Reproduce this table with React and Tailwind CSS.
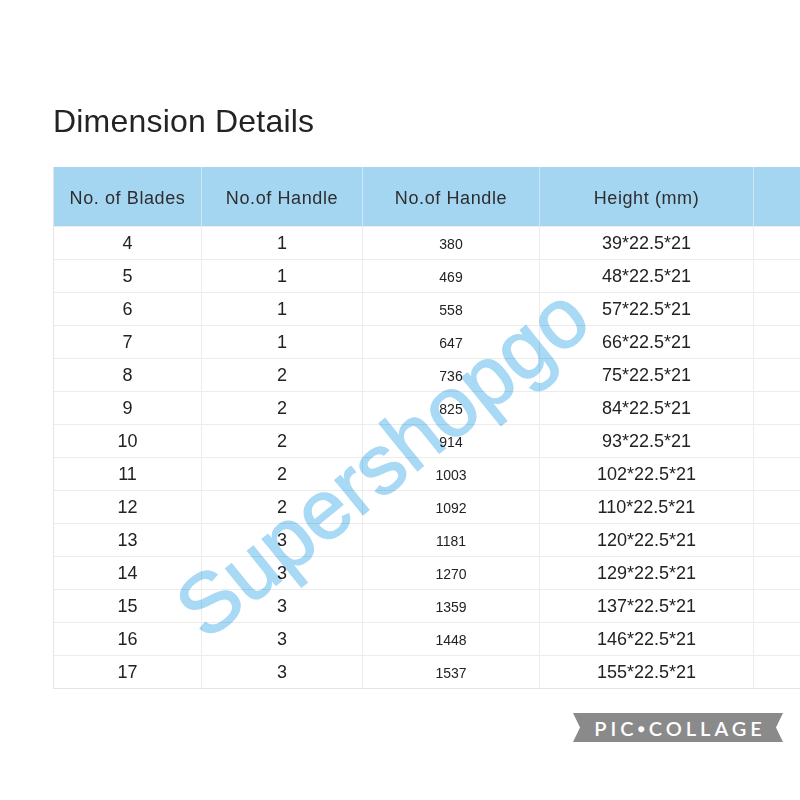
import React from 'react';

const rows = [
  ['4', '1', '380', '39*22.5*21'],
  ['5', '1', '469', '48*22.5*21'],
  ['6', '1', '558', '57*22.5*21'],
  ['7', '1', '647', '66*22.5*21'],
  ['8', '2', '736', '75*22.5*21'],
  ['9', '2', '825', '84*22.5*21'],
  ['10', '2', '914', '93*22.5*21'],
  ['11', '2', '1003', '102*22.5*21'],
  ['12', '2', '1092', '110*22.5*21'],
  ['13', '3', '1181', '120*22.5*21'],
  ['14', '3', '1270', '129*22.5*21'],
  ['15', '3', '1359', '137*22.5*21'],
  ['16', '3', '1448', '146*22.5*21'],
  ['17', '3', '1537', '155*22.5*21'],
];

const headers = ['No. of Blades', 'No.of Handle', 'No.of Handle', 'Height (mm)', ''];

const cols = 'grid grid-cols-[148px_161px_177px_214px_200px]';

const App = () => {
  return (
    <div className="relative w-[800px] h-[800px] overflow-hidden bg-white font-['Liberation_Sans',Arial,sans-serif]">
      <div className="pt-[101px] pl-[53px]">
        {/* Title */}
        <h1 className="text-[32px] leading-[40px] text-[#232323] tracking-[0.2px]">Dimension Details</h1>

        {/* Table */}
        <div className="mt-[26px] w-[900px] border-l border-b border-[#e4e4e4]">
          <div className={`${cols} h-[59px] bg-[#a4d6f2]`}>
            {headers.map((h, i) => (
              <div
                key={i}
                className="flex items-center justify-center pt-[3px] border-r border-[#cbe7f8] text-[18px] tracking-[0.6px] text-[#2e2e2e]"
              >
                {h}
              </div>
            ))}
          </div>
          {rows.map((r) => (
            <div key={r[0]} className={`${cols} h-[33px] border-t border-[#ececec]`}>
              <div className="flex items-center justify-center border-r border-[#ececec] text-[18px] text-[#222]">{r[0]}</div>
              <div className="flex items-center justify-center border-r border-[#ececec] text-[18px] text-[#222]">{r[1]}</div>
              <div className="flex items-center justify-center border-r border-[#ececec] text-[14px] pt-[3px] text-[#222]">{r[2]}</div>
              <div className="flex items-center justify-center border-r border-[#ececec] text-[18px] text-[#222]">{r[3]}</div>
              <div className="border-r border-[#ececec]"></div>
            </div>
          ))}
        </div>
      </div>

      {/* Watermark */}
      <div className="absolute left-[382px] top-[462px] -translate-x-1/2 -translate-y-1/2 -rotate-[39deg] text-[84px] leading-none text-[#a8d9f5] [-webkit-text-stroke:1.5px_#a8d9f5] mix-blend-multiply whitespace-nowrap pointer-events-none">
        Supershopgo
      </div>

      {/* PIC-COLLAGE badge */}
      <div className="absolute left-[573px] top-[713px] w-[210px] h-[29px] bg-[#8a8a8a] flex items-center justify-center [clip-path:polygon(0_0,100%_0,calc(100%-7px)_50%,100%_100%,0_100%,7px_50%)]">
        <span className="text-white text-[20px] font-semibold tracking-[4px] font-['Lato',sans-serif] leading-none pl-[4px]">
          PIC<span className="text-[12px] align-[3px]">●</span>COLLAGE
        </span>
      </div>
    </div>
  );
};

export default App;
